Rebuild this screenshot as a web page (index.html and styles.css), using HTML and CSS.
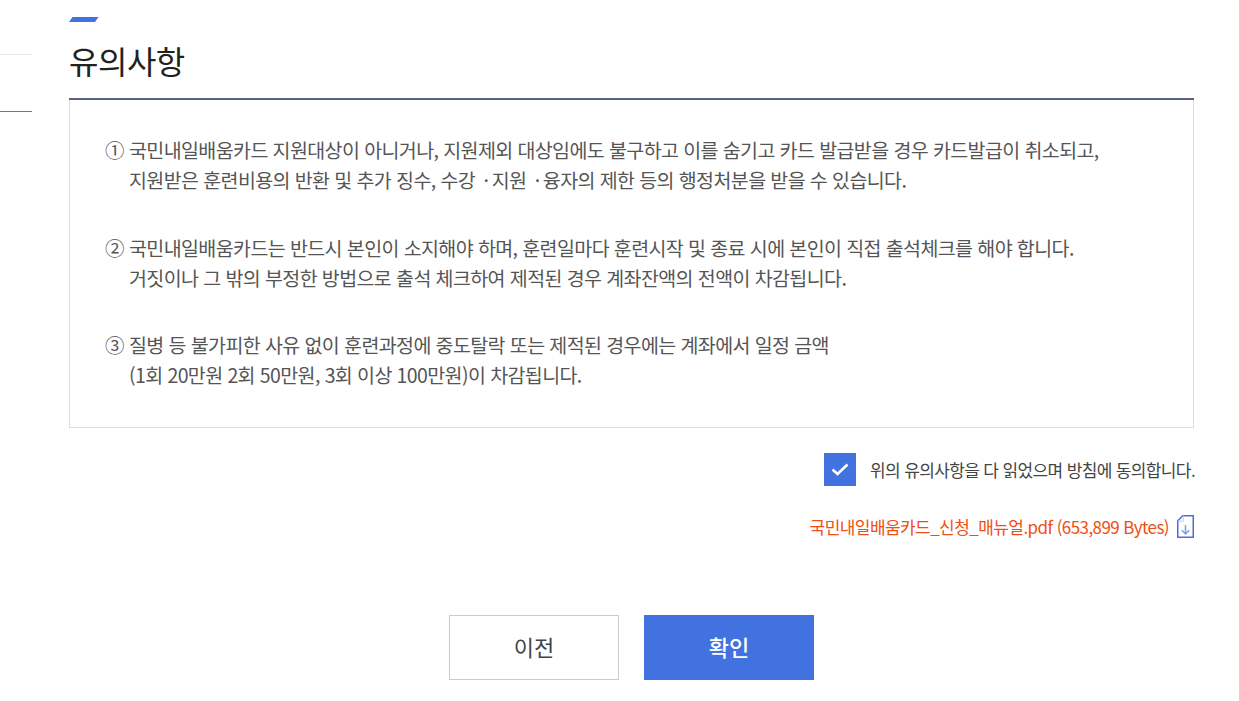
FILE: index.html
```html
<!DOCTYPE html>
<html lang="ko">
<head>
    <meta charset="utf-8">
    <title>유의사항</title>
    <link rel="stylesheet" href="styles.css">
</head>
<body>
    <div class="page">
        <aside class="side">
            <div class="side-item"></div>
            <div class="side-item side-item-on"></div>
        </aside>
        <main class="content">
            <div class="accent"></div>
            <h2 class="title">유의사항</h2>
            <div class="notice">
                <p class="notice-item"><span class="num">①</span>국민내일배움카드 지원대상이 아니거나, 지원제외 대상임에도 불구하고 이를 숨기고 카드 발급받을 경우 카드발급이 취소되고,<br>지원받은 훈련비용의 반환 및 추가 징수, 수강 <span class="dot">·</span>지원 <span class="dot">·</span>융자의 제한 등의 행정처분을 받을 수 있습니다.</p>
                <p class="notice-item"><span class="num">②</span>국민내일배움카드는 반드시 본인이 소지해야 하며, 훈련일마다 훈련시작 및 종료 시에 본인이 직접 출석체크를 해야 합니다.<br>거짓이나 그 밖의 부정한 방법으로 출석 체크하여 제적된 경우 계좌잔액의 전액이 차감됩니다.</p>
                <p class="notice-item"><span class="num">③</span>질병 등 불가피한 사유 없이 훈련과정에 중도탈락 또는 제적된 경우에는 계좌에서 일정 금액<br>(1회 20만원 2회 50만원, 3회 이상 100만원)이 차감됩니다.</p>
            </div>
            <label class="agree">
                <span class="check">
                    <svg width="18" height="13" viewBox="0 0 18 13"><path d="M1.5 6.5l5 4.5L16.5 1.5" fill="none" stroke="#fff" stroke-width="2.6"/></svg>
                </span>
                <span>위의 유의사항을 다 읽었으며 방침에 동의합니다.</span>
            </label>
            <div class="file">
                <a class="file-link">국민내일배움카드_신청_매뉴얼.pdf (653,899 Bytes)</a>
                <svg class="file-icon" width="17" height="23" viewBox="0 0 17 23"><path d="M5.75.75h10.5v21.5H.75V5.75z" fill="#fff" stroke="#4272e0" stroke-width="1.5"/><path d="M.75 6.25h5.5V.75" fill="none" stroke="#c4cfe6"/><path d="M8.5 10v9M4.8 15.3l3.7 3.7 3.7-3.7" fill="none" stroke="#7d9de8" stroke-width="1.5"/></svg>
            </div>
            <div class="buttons">
                <button class="btn">이전</button>
                <button class="btn btn-primary">확인</button>
            </div>
        </main>
    </div>
</body>
</html>
```

FILE: styles.css
```css
html, body {
    margin: 0;
    background: #fff;
}
body {
    font-family: "Noto Sans CJK KR", "Noto Sans", sans-serif;
    color: #555;
    overflow: hidden;
}
.page {
    display: flex;
    height: 701px;
    gap: 37px;
}
.side {
    width: 32px;
    padding-top: 54px;
}
.side-item {
    height: 56px;
    border-top: 1px solid #e8e8e8;
}
.side-item-on {
    border-top-color: #777;
}
.content {
    width: 1125px;
    padding-top: 17px;
}
.accent {
    width: 26px;
    height: 5px;
    background: #4272e0;
    transform: skewX(-35deg);
    transform-origin: bottom left;
}
.title {
    margin: 0;
    height: 76px;
    font-size: 32px;
    font-weight: 400;
    line-height: 77px;
    color: #222;
    letter-spacing: -0.5px;
    border-bottom: 2px solid #5a6288;
}
.notice {
    border: 1px solid #ddd;
    border-top: 0;
    height: 328px;
    box-sizing: border-box;
    margin-bottom: 25px;
    padding: 35px 35px 0;
}
.notice-item {
    margin: 0 0 37.1px;
    padding-left: 24px;
    position: relative;
    font-size: 19.5px;
    line-height: 30.2px;
    letter-spacing: -0.6px;
    white-space: nowrap;
}
.dot {
    padding: 0 3.3px 0 3.5px;
}
.num {
    position: absolute;
    left: 0;
    top: 0;
}
.agree {
    display: flex;
    justify-content: flex-end;
    align-items: center;
    gap: 14px;
    margin-right: -1px;
    font-size: 17px;
    letter-spacing: -0.63px;
    color: #444;
}
.check {
    width: 32px;
    height: 33px;
    background: #4272e0;
    display: flex;
    align-items: center;
    justify-content: center;
}
.file {
    display: flex;
    justify-content: flex-end;
    align-items: center;
    gap: 8px;
    margin-top: 28px;
    font-size: 17px;
    letter-spacing: -0.57px;
    color: #f04e12;
}
.buttons {
    display: flex;
    justify-content: center;
    gap: 25px;
    margin-top: 76px;
}
.btn {
    width: 170px;
    height: 65px;
    padding: 0 0 4px;
    border: 1px solid #ccc;
    background: #fff;
    font-family: inherit;
    font-size: 22px;
    color: #444;
    cursor: pointer;
}
.btn-primary {
    background: #4272e0;
    border-color: #4272e0;
    color: #fff;
    font-weight: 500;
}
```
